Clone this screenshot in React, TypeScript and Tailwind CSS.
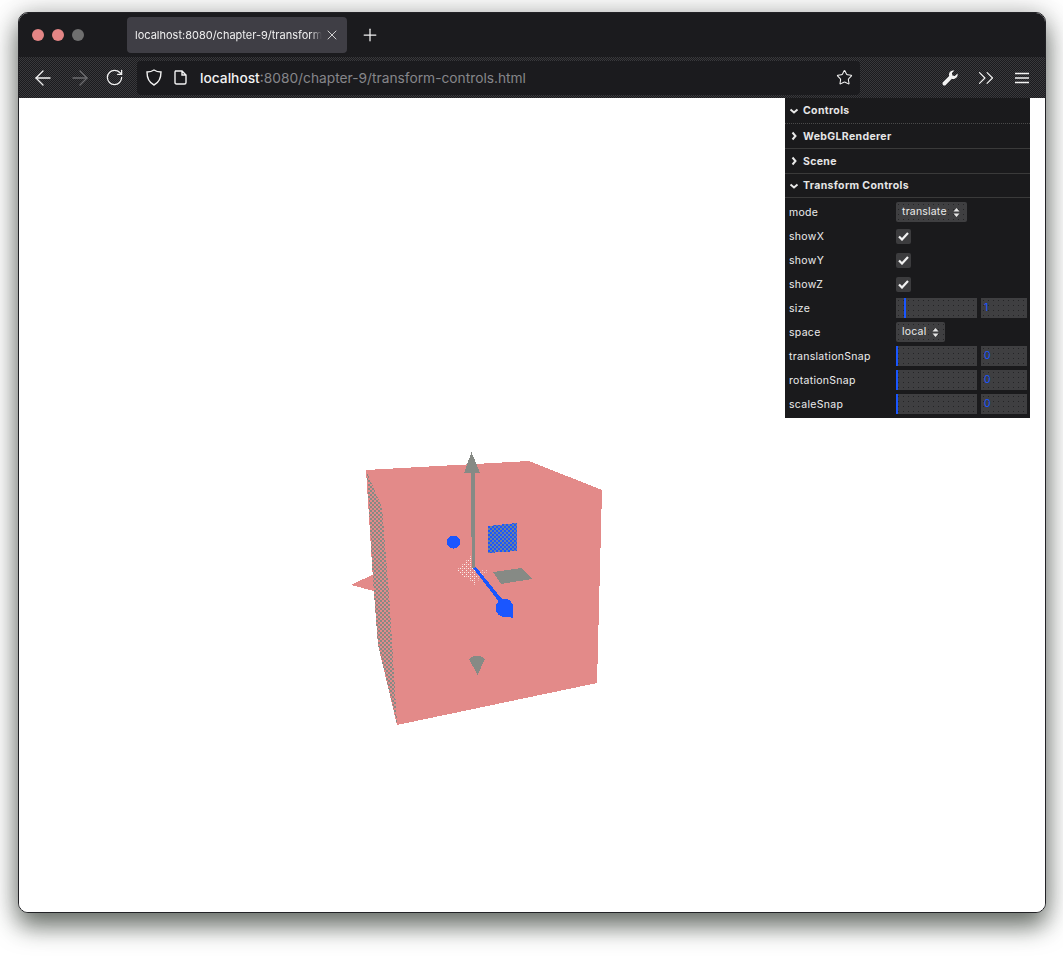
import React from "react";
import { ArrowLeft, ArrowRight, RotateCw, Star, ChevronsRight, X, Plus } from "lucide-react";

const uiFont = "font-['Inter','Liberation_Sans',sans-serif]";
const dotted = "bg-[radial-gradient(circle,#242426_0.6px,#3f3f41_0.7px)] bg-[length:5px_5px]";

function Header({ open, label, dash, h }: { open?: boolean; label: string; dash?: boolean; h: string }) {
  return (
    <div className={`flex items-center pl-[4px] border-b ${h} ${dash ? "border-dotted border-[#4a4a4a]" : "border-[#3a3a3a]"}`}>
      <svg width="10" height="10" viewBox="0 0 10 10" className="mr-[4px]" fill="none" stroke="#e8e8e8" strokeWidth="2">
        {open ? <path d="M1.5 3.5 L5 6.5 L8.5 3.5" /> : <path d="M3.5 1.5 L6.5 5 L3.5 8.5" />}
      </svg>
      <span className={`text-[10.5px] font-bold tracking-[0.35px] text-[#e6e6e6] ${dash ? "" : "pt-[1px]"}`}>{label}</span>
    </div>
  );
}

function Row({ label, children }: { label: string; children: React.ReactNode }) {
  return (
    <div className="flex items-center h-[24px] pl-[4px]">
      <span className="w-[107px] pt-[1px] text-[10.5px] tracking-[0.3px] text-[#ececec]">{label}</span>
      {children}
    </div>
  );
}

function Select({ value, w }: { value: string; w: string }) {
  return (
    <div className={`flex items-center h-[20px] pl-[6px] rounded-[2px] ${dotted} ${w}`}>
      <span className="text-[10.5px] tracking-[0.2px] text-[#ececec]">{value}</span>
      <svg width="7" height="9" viewBox="0 0 7 9" className="ml-[6px]" fill="#e6e6e6">
        <path d="M3.5 0 L6.5 3.5 H0.5 Z M3.5 9 L0.5 5.5 H6.5 Z" />
      </svg>
    </div>
  );
}

function Check() {
  return (
    <div className="flex items-center justify-center w-[15px] h-[15px] bg-[#3c3c3e] rounded-[2px]">
      <svg width="11" height="9" viewBox="0 0 11 9" fill="none" stroke="#f2f2f2" strokeWidth="2.2">
        <path d="M1 4.5 L4 7.5 L10 1" />
      </svg>
    </div>
  );
}

function Slider({ value, offset }: { value: string; offset?: boolean }) {
  return (
    <div className="flex items-center gap-[4px]">
      <div className={`flex h-[20px] w-[81px] ${dotted} ${offset ? "pl-[8px]" : ""}`}>
        <div className="w-[2px] h-full bg-[#1a56ff]" />
      </div>
      <div className={`flex items-center h-[20px] w-[46px] pl-[3px] text-[10.5px] text-[#1a56ff] ${dotted}`}>{value}</div>
    </div>
  );
}

function Scene() {
  return (
    <svg className="w-full h-full block" viewBox="0 0 1026 814" shapeRendering="crispEdges">
      <defs>
        <pattern id="checkBlue" width="4" height="4" patternUnits="userSpaceOnUse">
          <rect width="4" height="4" fill="#1a56ff" />
          <rect width="2" height="2" fill="#6f8099" />
          <rect x="2" y="2" width="2" height="2" fill="#6f8099" />
        </pattern>
        <pattern id="stripGray" width="4" height="4" patternUnits="userSpaceOnUse">
          <rect width="4" height="4" fill="#e38a89" />
          <rect width="2" height="2" fill="#868a85" />
          <rect x="2" y="2" width="2" height="2" fill="#868a85" />
        </pattern>
        <pattern id="dots" width="4" height="4" patternUnits="userSpaceOnUse">
          <rect width="4" height="4" fill="#e38a89" />
          <rect width="1" height="1" fill="#fbf3f0" />
          <rect x="2" y="2" width="1" height="1" fill="#fbf3f0" />
          <rect x="2" y="0" width="1" height="1" fill="#f3c8c4" />
        </pattern>
      </defs>
      <g transform="translate(-19,-98)">
        <polygon points="351,585 374,574 374,591" fill="#e38a89" />
        <polygon points="366,470 529,461 602,490 597,683 397,725 378,645 373,580" fill="#e38a89" />
        <polygon points="367,472 382,507 390,607 396,707 397,724 378,645 373,580" fill="url(#stripGray)" />
        <polygon points="457,570 473,553 478,572 475,586" fill="url(#dots)" />
        <polygon points="476,569 490,571 478,582" fill="url(#dots)" opacity="0.6" />
        <polygon points="488,526 517,523 517,551 488,553" fill="url(#checkBlue)" />
        <polygon points="493,572 522,568 532,579 501,584" fill="#868a85" />
        <polygon points="471.5,452 480,473 475,473 475,568 472,568 470.5,473 464,473" fill="#868a85" />
        <polygon points="473,568 476,567 506,604 503,607" fill="#1a56ff" />
        <circle cx="504.5" cy="608" r="9" fill="#1a56ff" />
        <polygon points="504,616 513,618 513.5,608" fill="#1a56ff" />
        <circle cx="453.5" cy="542" r="6.5" fill="#1a56ff" />
        <path d="M469 659 Q477 652 485 659 L477.5 675 Z" fill="#868a85" />
      </g>
    </svg>
  );
}

export default function App() {
  return (
    <div className={`min-h-[961px] bg-white pt-[12px] px-[18px] overflow-hidden ${uiFont}`}>
      <div className="flex flex-col h-[901px] w-[1028px] rounded-[10px] border border-[#222226] bg-white overflow-hidden shadow-[0_14px_24px_rgba(30,40,30,0.6),0_0_28px_rgba(0,0,0,0.24)]">
        {/* tabs */}
        <div className="flex items-center h-[44px] shrink-0 bg-[#1b1b1e]">
          <div className="flex gap-[8px] pl-[13px] w-[108px]">
            <div className="w-[12px] h-[12px] rounded-full bg-[#e38585]" />
            <div className="w-[12px] h-[12px] rounded-full bg-[#e38585]" />
            <div className="w-[12px] h-[12px] rounded-full bg-[#6f6f6f]" />
          </div>
          <div className="flex items-center w-[220px] h-[36px] pl-[8px] rounded-[4px] bg-[#3f3e45]">
            <span className="w-[187px] overflow-hidden whitespace-nowrap text-[11px] pt-[1px] text-[#f0f0f0] [mask-image:linear-gradient(to_right,black_94%,transparent)]">
              localhost:8080/chapter-9/transform-controls.html
            </span>
            <X size={16} color="#e8e8e8" strokeWidth={1.3} className="ml-[2px]" />
          </div>
          <Plus size={20} color="#f2f2f2" strokeWidth={1.5} className="ml-[13px]" />
        </div>
        {/* toolbar */}
        <div className="flex items-center h-[41px] shrink-0 bg-[repeating-conic-gradient(#1b1b1e_0_25%,#39393c_0_50%)] bg-[length:2px_2px]">
          <ArrowLeft size={24} color="#f2f2f2" strokeWidth={1.3} className="ml-[12px]" />
          <ArrowRight size={24} color="#6d6d70" strokeWidth={1.3} className="ml-[13px]" />
          <RotateCw size={19} color="#f2f2f2" strokeWidth={1.6} className="ml-[13px]" />
          <div className="flex items-center w-[723px] h-[34px] ml-[13px] rounded-[4px] bg-[#1b1b1e]">
            <svg width="16" height="17" viewBox="0 0 16 17" className="ml-[9px]" fill="none" stroke="#f2f2f2" strokeWidth="1.4">
              <path d="M8 1 C10 2.4 12.5 3 15 3 C15 9 13 13.5 8 16 C3 13.5 1 9 1 3 C3.5 3 6 2.4 8 1 Z" />
            </svg>
            <svg width="13" height="15" viewBox="0 0 13 15" className="ml-[12px]" fill="none" stroke="#f2f2f2" strokeWidth="1.4">
              <path d="M1.5 1 H8 L12 5 V12.5 Q12 14 10.5 14 H2.5 Q1 14 1 12.5 V2 Z M8 1 V5 H12" />
            </svg>
            <span className="ml-[13px] pt-[1px] whitespace-nowrap text-[13.75px]">
              <span className="text-[#f2f2f2] font-medium">localhost</span>
              <span className="text-[#86868a]">:8080/chapter-9/transform-controls.html</span>
            </span>
            <Star size={17} color="#f2f2f2" strokeWidth={1.5} className="ml-auto mr-[7px]" />
          </div>
          <svg width="16" height="16" viewBox="0 0 16 16" className="ml-[82px]" fill="#f2f2f2">
            <path d="M15.5 3.6 L12.8 6 L10.4 5.4 L9.9 3.1 L12.4 0.6 C10.1 -0.1 7.4 1.3 7 4 C6.9 4.8 7 5.5 7.2 6.1 L1 12.3 C0.2 13.1 0.4 14.3 1.1 14.9 C1.8 15.6 2.9 15.7 3.7 14.9 L9.8 8.8 C12.8 9.7 16.4 7 15.5 3.6 Z" />
          </svg>
          <ChevronsRight size={26} color="#f2f2f2" strokeWidth={1.1} className="ml-[15px]" />
          <svg width="14" height="12" viewBox="0 0 14 12" className="ml-[16px]" fill="none" stroke="#f2f2f2" strokeWidth="1.5">
            <path d="M0 1.5 H14 M0 6 H14 M0 10.5 H14" />
          </svg>
        </div>
        {/* content */}
        <div className="flex-1 relative bg-white">
          <Scene />
          <div className="absolute top-0 left-[766px] w-[245px] h-[320px] bg-[#1a1a1c]">
            <Header open label="Controls" dash h="h-[26px]" />
            <Header label="WebGLRenderer" h="h-[25px]" />
            <Header label="Scene" h="h-[25px]" />
            <Header open label="Transform Controls" h="h-[24px]" />
            <div className="pt-[2px]">
              <Row label="mode"><Select value="translate" w="w-[71px]" /></Row>
              <Row label="showX"><Check /></Row>
              <Row label="showY"><Check /></Row>
              <Row label="showZ"><Check /></Row>
              <Row label="size"><Slider value="1" offset /></Row>
              <Row label="space"><Select value="local" w="w-[49px]" /></Row>
              <Row label="translationSnap"><Slider value="0" /></Row>
              <Row label="rotationSnap"><Slider value="0" /></Row>
              <Row label="scaleSnap"><Slider value="0" /></Row>
            </div>
          </div>
        </div>
      </div>
    </div>
  );
}
